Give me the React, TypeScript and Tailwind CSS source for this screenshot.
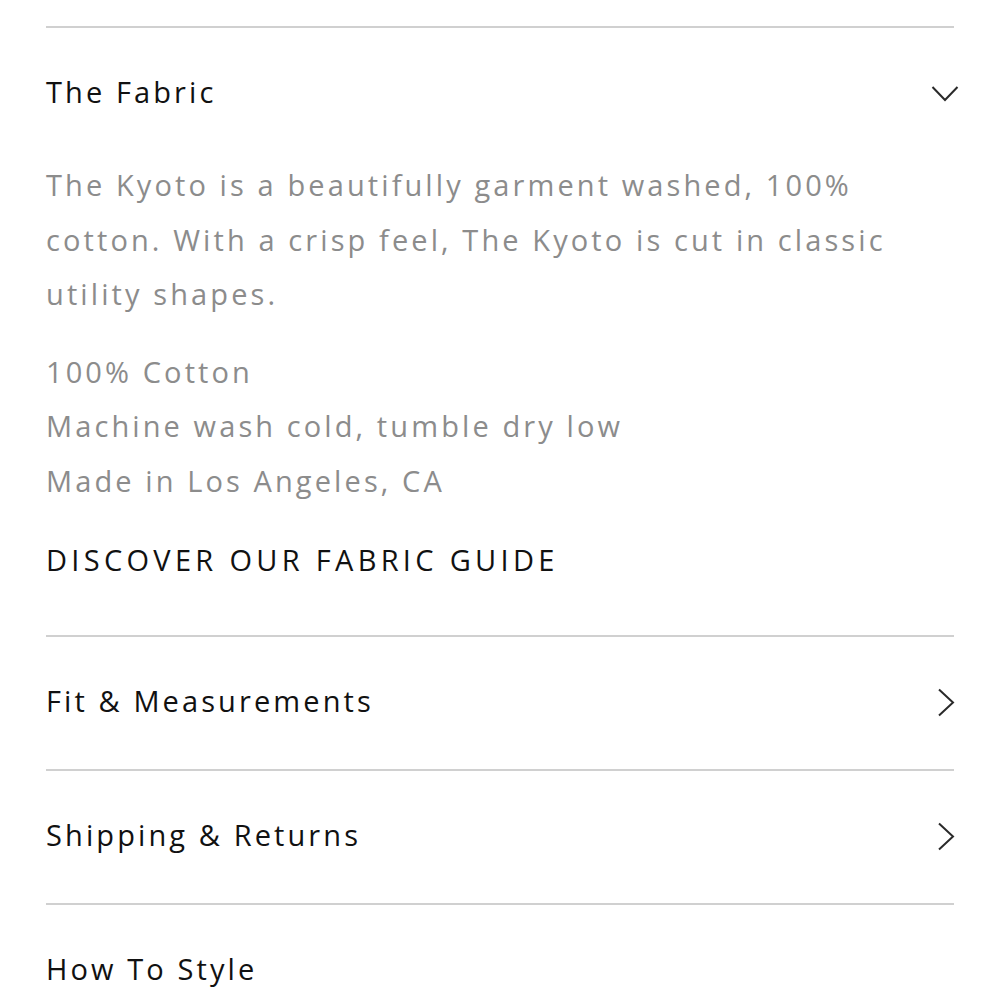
const font = { fontFamily: '"Open Sans", Lato, sans-serif' }

function ChevronDown() {
  return (
    <svg width="28" height="18" viewBox="0 0 28 18" fill="none" className="-mr-[5px]">
      <path d="M1.5 2L14 15L26.5 2" stroke="#2a2a2a" strokeWidth="2" />
    </svg>
  )
}

function ChevronRight() {
  return (
    <svg width="18" height="29" viewBox="0 0 18 29" fill="none" className="-mr-[1px]">
      <path d="M2 1.5L16 14.5L2 27.5" stroke="#2a2a2a" strokeWidth="2" />
    </svg>
  )
}

function Row({ title, icon }: { title: string; icon: React.ReactNode }) {
  return (
    <div className="flex h-[134px] items-center justify-between border-t-2 border-[#d0d0d0]">
      <span className="pb-[4px] text-[29px] tracking-[3.1px] text-[#111]">{title}</span>
      {icon}
    </div>
  )
}

export default function App() {
  return (
    <div className="h-[1000px] overflow-hidden bg-white px-[46px] pt-[26px]" style={font}>
      <Row title="The Fabric" icon={<ChevronDown />} />
      <div className="-mt-[2px] pb-[47px]">
        <p className="text-[29px] leading-[54.5px] tracking-[3.1px] text-[#8c8c8c]">
          The Kyoto is a beautifully garment washed, 100%
          <br />
          cotton. With a crisp feel, The Kyoto is cut in classic
          <br />
          utility shapes.
        </p>
        <ul className="mt-[23px] text-[29px] leading-[54.5px] tracking-[3.1px] text-[#8c8c8c]">
          <li>100% Cotton</li>
          <li>Machine wash cold, tumble dry low</li>
          <li>Made in Los Angeles, CA</li>
        </ul>
        <a href="#" className="mt-[25px] block text-[29px] leading-[54.5px] tracking-[4.3px] text-[#111]">
          DISCOVER OUR FABRIC GUIDE
        </a>
      </div>
      <Row title="Fit & Measurements" icon={<ChevronRight />} />
      <Row title="Shipping & Returns" icon={<ChevronRight />} />
      <Row title="How To Style" icon={null} />
    </div>
  )
}
